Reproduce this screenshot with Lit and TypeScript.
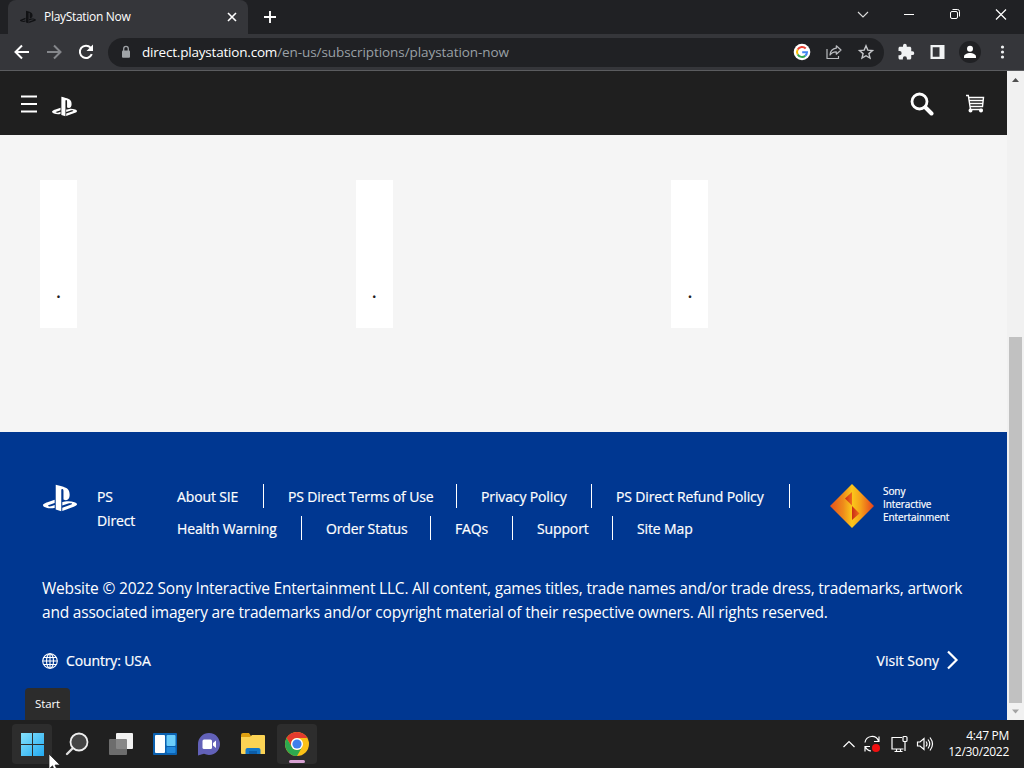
import { LitElement, html, css, svg } from 'lit';

type FooterLink = {
  label: string
  width: number // label width, the separator follows after the padding
  last?: boolean
}

const linkRows: FooterLink[][] = [
  [
    { label: 'About SIE', width: 62 },
    { label: 'PS Direct Terms of Use', width: 144 },
    { label: 'Privacy Policy', width: 86 },
    { label: 'PS Direct Refund Policy', width: 149 },
  ],
  [
    { label: 'Health Warning', width: 100 },
    { label: 'Order Status', width: 80 },
    { label: 'FAQs', width: 33 },
    { label: 'Support', width: 51 },
    { label: 'Site Map', width: 56, last: true },
  ],
]

const psLogo = svg`<path fill="currentColor" d="M8.984 2.596v17.547l3.915 1.261V6.688c0-.69.304-1.151.794-.991.636.18.76.814.76 1.505v5.875c2.441 1.193 4.362-.002 4.362-3.152 0-3.237-1.126-4.675-4.438-5.827-1.307-.448-3.728-1.186-5.39-1.502zm4.656 16.241l6.296-2.275c.715-.258.826-.625.246-.818-.586-.192-1.637-.139-2.357.123l-4.205 1.5V14.98l.24-.085s1.201-.42 2.913-.615c1.696-.18 3.785.03 5.437.661 1.848.601 2.04 1.472 1.576 2.072-.465.6-1.622 1.036-1.622 1.036l-8.544 3.107V18.86zM1.807 18.6c-1.9-.545-2.214-1.668-1.352-2.32.801-.586 2.16-1.052 2.16-1.052l5.615-2.013v2.313L4.205 17c-.705.271-.825.632-.239.826.586.195 1.637.15 2.343-.12L8.247 17v2.074c-.12.03-.256.044-.39.073-1.939.331-3.996.196-6.038-.479z"/>`

export class BrowserChrome extends LitElement {

  static get styles() {
    return css`

    :host {
      display: block;
      height: 71px;
      color: #fff;
    }

    :host * {
      box-sizing: border-box;
    }

    svg {
      display: block;
      flex: none;
    }

    .tabs {
      display: flex;
      height: 34px;
      padding-left: 8px;
      background: #202124;
    }

    .tab {
      display: flex;
      align-items: center;
      width: 240px;
      height: 34px;
      padding: 0 10px 0 12px;
      background: #35363a;
      border-radius: 8px 8px 0 0;
      font-size: 12px;
      letter-spacing: -0.3px;
    }

    .favicon {
      color: #111214;
      margin-right: 8px;
    }

    .title {
      flex: 1;
      padding-bottom: 2px;
      white-space: nowrap;
    }

    .new-tab {
      margin: 10px 0 0 15px;
    }

    .window {
      display: flex;
      align-items: center;
      height: 29px;
      margin-left: auto;
      padding-right: 16px;
      gap: 32px;
    }

    .toolbar {
      display: flex;
      align-items: center;
      height: 36px;
      padding: 0 13px 0 13px;
      background: #35363a;
    }

    .nav {
      display: flex;
      gap: 14px;
    }

    .address {
      display: flex;
      align-items: center;
      width: 776px;
      height: 29px;
      margin-left: 13px;
      padding: 0 9px 0 10px;
      border-radius: 15px;
      background: #202124;
      font-size: 13.5px;
    }

    .url {
      flex: 1;
      margin-left: 8px;
      padding-bottom: 1px;
      color: #9aa0a6;
      white-space: nowrap;
      letter-spacing: -0.07px;
    }

    .domain {
      color: #fff;
      letter-spacing: -0.2px;
    }

    .actions {
      display: flex;
      gap: 14px;
    }

    .tools {
      display: flex;
      align-items: center;
      flex: 1;
      justify-content: space-between;
      padding-left: 13px;
    }

    .line {
      height: 1px;
      background: #5b5c5f;
    }

    `;
  }

  render() {
    return html`
    <div class="tabs">
      <div class="tab">
        <svg class="favicon" width="16" height="16" viewBox="0 0 24 24">${psLogo}</svg>
        <span class="title">PlayStation Now</span>
        <svg width="12" height="12" viewBox="0 0 12 12"><path d="M2 2l8 8M10 2l-8 8" stroke="#fff" stroke-width="1.6"/></svg>
      </div>
      <svg class="new-tab" width="14" height="14" viewBox="0 0 14 14"><path d="M7 1v12M1 7h12" stroke="#fff" stroke-width="1.9"/></svg>
      <div class="window">
        <svg width="14" height="14" viewBox="0 0 14 14"><path d="M2 4l5 5 5-5" fill="none" stroke="#ddd" stroke-width="1.1"/></svg>
        <svg width="14" height="14" viewBox="0 0 14 14"><path d="M2 6.500h10" stroke="#fff"/></svg>
        <svg width="14" height="14" viewBox="0 0 14 14" fill="none" stroke="#fff"><rect x="2.500" y="3.500" width="7" height="7" rx="1.500"/><path d="M4.500 1.500h5a2 2 0 0 1 2 2v5"/></svg>
        <svg width="14" height="14" viewBox="0 0 14 14"><path d="M2 1.500l10 10M12 1.500L2 11.500" stroke="#fff" stroke-width="1.200"/></svg>
      </div>
    </div>
    <div class="toolbar">
      <div class="nav">
        <svg width="18" height="18" viewBox="0 0 18 18"><path d="M16 9H3M9 2.500L2.500 9 9 15.500" fill="none" stroke="#fff" stroke-width="2"/></svg>
        <svg width="18" height="18" viewBox="0 0 18 18"><path d="M2 9h13M9 2.500L15.500 9 9 15.500" fill="none" stroke="#85878b" stroke-width="2"/></svg>
        <svg width="18" height="18" viewBox="0 0 18 18"><path d="M14.800 11.200A6.200 6.200 0 1 1 13.600 4.600L15 6" fill="none" stroke="#fff" stroke-width="2"/><path d="M16 1.500V8H9.500z" fill="#fff"/></svg>
      </div>
      <div class="address">
        <svg width="16" height="16" viewBox="0 0 16 16"><rect x="4" y="6.500" width="8" height="7.300" rx="1" fill="#a0a4a8"/><path d="M5.700 7V4.700a2.300 2.300 0 0 1 4.600 0V7" fill="none" stroke="#a0a4a8" stroke-width="1.300"/></svg>
        <span class="url"><span class="domain">direct.playstation.com</span>/en-us/subscriptions/playstation-now</span>
        <div class="actions">
          <svg width="18" height="18" viewBox="0 0 18 18" fill="none" stroke-width="2">
            <circle cx="9" cy="9" r="8.300" fill="#fff"/>
            <path d="M12.700 5.500A5 5 0 0 0 4.700 6.500" stroke="#ea4335"/>
            <path d="M4.700 6.500a5 5 0 0 0 0 5" stroke="#fbbc05"/>
            <path d="M4.700 11.500a5 5 0 0 0 7.600 1.200" stroke="#34a853"/>
            <path d="M12.300 12.700A5 5 0 0 0 14 9.200H9.200" stroke="#4285f4"/>
          </svg>
          <svg width="18" height="18" viewBox="0 0 18 18" fill="none" stroke="#b9bbbf" stroke-width="1.200" stroke-linejoin="round"><path d="M2 6v9.500h11.500V13"/><path d="M11.300 2.800l4.700 4.200-4.700 4.200V8.800C8.300 8.700 6.300 9.800 5 12c.3-3.800 2.300-6.300 6.300-6.800z"/></svg>
          <svg width="18" height="18" viewBox="0 0 18 18"><path d="M9 2.800l1.800 4.300 4.700.4-3.600 3.100 1.100 4.500L9 12.700l-4 2.400 1.100-4.500-3.600-3.100 4.700-.4z" fill="none" stroke="#c5c7ca" stroke-width="1.400"/></svg>
        </div>
      </div>
      <div class="tools">
        <svg width="18" height="18" viewBox="0 0 24 24"><path fill="#f1f3f4" d="M20.500 11H19V7c0-1.100-.9-2-2-2h-4V3.500a2.500 2.500 0 0 0-5 0V5H4c-1.100 0-2 .9-2 2v3.800h1.500a2.700 2.700 0 0 1 0 5.400H2V20c0 1.100.9 2 2 2h3.800v-1.500a2.700 2.700 0 0 1 5.400 0V22H17c1.100 0 2-.9 2-2v-4h1.500a2.500 2.500 0 0 0 0-5z"/></svg>
        <svg width="16" height="16" viewBox="0 0 16 16"><path fill="#f1f3f4" fill-rule="evenodd" d="M1.500 1h14v14h-14zM3.700 3.200v9.600h6.800V3.200z"/></svg>
        <svg width="22" height="22" viewBox="0 0 22 22"><circle cx="11" cy="11" r="11" fill="#202124"/><circle cx="11" cy="7.800" r="3" fill="#fff"/><path fill="#fff" d="M5 17v-1.500c0-2.300 3.500-3.500 6-3.500s6 1.200 6 3.500V17z"/></svg>
        <svg width="16" height="16" viewBox="0 0 16 16" fill="#f1f3f4"><circle cx="7.500" cy="3" r="1.600"/><circle cx="7.500" cy="8" r="1.600"/><circle cx="7.500" cy="13" r="1.600"/></svg>
      </div>
    </div>
    <div class="line"></div>
    `
  }
}

export class StorePage extends LitElement {

  static get styles() {
    return css`

    :host {
      display: flex;
      height: 649px;
    }

    :host * {
      box-sizing: border-box;
    }

    svg {
      display: block;
      flex: none;
    }

    .page {
      display: flex;
      flex-direction: column;
      width: 1007px;
      color: #fff;
    }

    .header {
      display: flex;
      align-items: center;
      height: 64px;
      padding: 2px 21px 0 20px;
      background: #1f1f1f;
    }

    .header .logo {
      margin: 4px 0 0 13.500px;
    }

    .search {
      margin-left: auto;
    }

    .cart {
      margin-left: 30px;
    }

    .content {
      display: flex;
      height: 297px;
      padding: 45px 40px 0;
      gap: 278.700px;
      background: #f5f5f5;
    }

    .card {
      width: 37px;
      height: 148px;
      padding-top: 99px;
      background: #fff;
      color: #1f1f1f;
      font-size: 18px;
      font-weight: 600;
      line-height: 25px;
      text-align: center;
    }

    .footer {
      flex: 1;
      padding: 48px 42px 0;
      background: #003791;
      font-size: 14px;
      letter-spacing: -0.13px;
      -webkit-text-stroke: 0.2px #fff;
    }

    .top {
      display: flex;
      height: 72px;
    }

    .brand {
      width: 55px;
      padding: 1px 0 0 1px;
    }

    .direct {
      width: 80px;
      padding-top: 5px;
      line-height: 24px;
    }

    .direct span {
      display: block;
      width: 40px;
    }

    .row {
      display: flex;
      height: 32px;
      padding-top: 4px;
    }

    .link {
      box-sizing: content-box;
      height: 24px;
      padding-right: 24px;
      margin-right: 24px;
      border-right: 1px solid #fff;
      line-height: 25px;
      white-space: nowrap;
    }

    .link.last {
      border: none;
    }

    .links {
      width: 653px;
    }

    .sie {
      display: flex;
      gap: 9px;
      padding-top: 4px;
      font-size: 10px;
      line-height: 13px;
      letter-spacing: -0.08px;
    }

    .sie .name {
      width: 70px;
      padding-top: 1px;
    }

    .legal {
      margin: 24px -10px 0 0;
      font-size: 15.5px;
      line-height: 24px;
      letter-spacing: -0.2px;
      white-space: nowrap;
      -webkit-text-stroke: 0;
    }

    .bottom {
      display: flex;
      align-items: center;
      height: 24px;
      margin-top: 24px;
      padding-right: 5px;
    }

    .globe {
      margin-top: 2px;
    }

    .country {
      margin-left: 8px;
    }

    .visit {
      margin-left: auto;
      margin-right: 7px;
      letter-spacing: 0;
    }

    .scroll {
      display: flex;
      flex-direction: column;
      align-items: center;
      width: 17px;
      background: #f1f1f1;
    }

    .thumb {
      width: 13px;
      height: 366px;
      margin-top: 249px;
      background: #c1c1c1;
    }

    `;
  }

  render() {
    return html`
    <div class="page">
      <div class="header">
        <svg width="18" height="18" viewBox="0 0 18 18"><path d="M1 1.500h16M1 9h16M1 16.500h16" stroke="#fff" stroke-width="2"/></svg>
        <svg class="logo" width="25" height="25" viewBox="0 0 24 24">${psLogo}</svg>
        <svg class="search" width="24" height="24" viewBox="0 0 24 24" fill="none" stroke="#fff"><circle cx="9.500" cy="9.500" r="7.500" stroke-width="2.800"/><path d="M15.500 15.500l6 6" stroke-width="4" stroke-linecap="round"/></svg>
        <svg class="cart" width="22" height="20" viewBox="0 0 22 20" fill="none" stroke="#fff" stroke-width="1.400"><path d="M2 1.500h2.300L6.500 15.500H18.500M4.500 3.500H19.500l-1 9H6M5 6.500h14M5.500 9.500h13"/><circle cx="6.500" cy="16.500" r="1.300" fill="#fff"/><circle cx="17" cy="16.500" r="1.300" fill="#fff"/></svg>
      </div>
      <div class="content">
        <div class="card">.</div>
        <div class="card">.</div>
        <div class="card">.</div>
      </div>
      <div class="footer">
        <div class="top">
          <div class="brand"><svg width="34" height="34" viewBox="0 0 24 24">${psLogo}</svg></div>
          <div class="direct"><span>PS Direct</span></div>
          <div class="links">
            ${linkRows.map(row => html`
            <div class="row">
              ${row.map(link => html`<span class="link ${link.last ? 'last' : ''}" style="width:${link.width}px">${link.label}</span>`)}
            </div>`)}
          </div>
          <div class="sie">
            <svg width="44" height="44" viewBox="0 0 44 44">
              <defs>
                <linearGradient id="gold"><stop offset="0" stop-color="#e8501c"/><stop offset=".3" stop-color="#ee8b1b"/><stop offset=".5" stop-color="#fbc81a"/><stop offset=".7" stop-color="#f5a01a"/><stop offset="1" stop-color="#e5401c"/></linearGradient>
                <linearGradient id="red"><stop offset="0" stop-color="#c92a16"/><stop offset="1" stop-color="#ef6c1b"/></linearGradient>
              </defs>
              <path d="M22 0l22 22-22 22L0 22z" fill="url(#gold)"/>
              <path d="M22 8l-7 6.500 7 7z" fill="url(#red)"/>
              <path d="M22 22l7.500 7.500L22 36z" fill="url(#red)"/>
            </svg>
            <div class="name">Sony<br>Interactive<br>Entertainment</div>
          </div>
        </div>
        <div class="legal">Website © 2022 Sony Interactive Entertainment LLC. All content, games titles, trade names and/or trade dress, trademarks, artwork<br>and associated imagery are trademarks and/or copyright material of their respective owners. All rights reserved.</div>
        <div class="bottom">
          <svg class="globe" width="16" height="16" viewBox="0 0 16 16" fill="none" stroke="#fff" stroke-width="1.100"><circle cx="8" cy="8" r="7.300"/><ellipse cx="8" cy="8" rx="3.500" ry="7.300"/><path d="M8 .7v14.600M.7 8h14.600M1.500 4.500h13M1.500 11.500h13"/></svg>
          <span class="country">Country: USA</span>
          <span class="visit">Visit Sony</span>
          <svg width="14" height="20" viewBox="0 0 14 20"><path d="M2 1.500l8.500 8.500L2 18.500" fill="none" stroke="#fff" stroke-width="2.200"/></svg>
        </div>
      </div>
    </div>
    <div class="scroll">
      <svg width="17" height="17" viewBox="0 0 17 17"><path d="M5 11l3.500-4 3.500 4z" fill="#505050"/></svg>
      <div class="thumb"></div>
      <svg width="17" height="17" viewBox="0 0 17 17"><path d="M5 6.500h7l-3.500 4z" fill="#a3a3a3"/></svg>
    </div>
    `
  }
}

export class TaskBar extends LitElement {

  static get styles() {
    return css`

    :host {
      display: flex;
      align-items: center;
      justify-content: space-between;
      height: 48px;
      padding: 0 15px 0 12px;
      box-sizing: border-box;
      background: #202020;
      color: #fff;
    }

    svg {
      display: block;
    }

    .apps, .tray {
      display: flex;
      align-items: center;
    }

    .apps {
      gap: 4px;
    }

    .app {
      position: relative;
      display: grid;
      place-items: center;
      width: 40px;
      height: 40px;
      border-radius: 4px;
    }

    .start {
      margin-right: 1px;
    }

    .active {
      background: #2d2d2d;
    }

    .running {
      position: absolute;
      bottom: 1px;
      left: 12px;
      width: 16px;
      height: 3px;
      border-radius: 2px;
      background: #d7a1d2;
    }

    .tray {
      gap: 7px;
    }

    .volume {
      margin-left: 1px;
    }

    .clock {
      width: 62px;
      margin-left: 6px;
      font-size: 12px;
      line-height: 16px;
      letter-spacing: -0.3px;
      text-align: right;
      white-space: nowrap;
    }

    `;
  }

  render() {
    return html`
    <div class="apps">
      <div class="app start active">
        <svg width="24" height="24" viewBox="0 0 24 24">
          <defs><linearGradient id="win" x2="1" y2="1" gradientUnits="objectBoundingBox"><stop offset="0" stop-color="#86e2fc"/><stop offset="1" stop-color="#22aaf2"/></linearGradient></defs>
          <path d="M1 1H12v11H1zM13 1h11v11H13zM1 13h11v11H1zM13 13h11v11H13z" fill="url(#win)"/>
        </svg>
      </div>
      <div class="app">
        <svg width="24" height="24" viewBox="0 0 24 24"><path d="M8 16l-6 6" stroke="#ddd" stroke-width="2.400" stroke-linecap="round"/><circle cx="14" cy="10" r="8.500" fill="#444" stroke="#eee" stroke-width="1.800"/></svg>
      </div>
      <div class="app">
        <svg width="24" height="24" viewBox="0 0 24 24"><rect x="7" y="1" width="17" height="16" rx="1" fill="#f1f1f1"/><rect y="7" width="18" height="16" rx="1" fill="#777" fill-opacity=".88"/></svg>
      </div>
      <div class="app">
        <svg width="24" height="24" viewBox="0 0 24 24"><rect y="1" width="24" height="22" rx="1" fill="#0b61b0"/><rect x="2" y="3" width="10" height="18" rx="1" fill="#fff"/><rect x="13.500" y="3" width="9" height="11" rx="1" fill="#6bcdfa"/><rect x="13.500" y="15" width="9" height="6" rx="1" fill="#2289dc"/></svg>
      </div>
      <div class="app">
        <svg width="24" height="24" viewBox="0 0 24 24"><path d="M12 1a11 11 0 1 1-5 20.800L1 23.500V12A11 11 0 0 1 12 1z" fill="#6261b8"/><rect x="5.500" y="7.500" width="9.500" height="9.500" rx="1.500" fill="#fff"/><path d="M16 11l3-2.500v7.500l-3-2.500z" fill="#fff"/></svg>
      </div>
      <div class="app">
        <svg width="26" height="24" viewBox="0 0 26 24"><path d="M1 3q0-2 2-2h6l2 3v3H1z" fill="#dfa011"/><path d="M1 5h9l2-2h12q1 0 1 1v18H2q-1 0-1-1z" fill="#fcd354"/><path d="M5.500 22v-4q0-2 2-2h11q2 0 2 2v4z" fill="#1477c8"/><path d="M9 19h8v3H9z" fill="#0c5da8"/></svg>
      </div>
      <div class="app active">
        <svg width="24" height="24" viewBox="0 0 24 24">
          <circle cx="12" cy="12" r="12" fill="#fbc117"/>
          <path d="M1.610 6A12 12 0 0 1 22.390 6H12a6 6 0 0 0-5.200 9z" fill="#e33b2e"/>
          <path d="M1.610 6A12 12 0 0 0 12 24l5.200-9a6 6 0 0 1-10.400 0z" fill="#2da94f"/>
          <circle cx="12" cy="12" r="6" fill="#fff"/><circle cx="12" cy="12" r="4.600" fill="#3f7fea"/>
        </svg>
        <div class="running"></div>
      </div>
    </div>
    <div class="tray">
      <svg width="14" height="14" viewBox="0 0 14 14"><path d="M1.500 10L7 4.500 12.500 10" fill="none" stroke="#fff" stroke-width="1.200"/></svg>
      <svg width="18" height="18" viewBox="0 0 18 18" fill="none" stroke="#fff" stroke-width="1.200"><path d="M2 7.500A7 7 0 0 1 15.500 6M16 1.500V6.500h-5M8 16A7 7 0 0 1 2.500 12M2 16.500v-5h5"/><circle cx="13" cy="13" r="4" fill="#f01010" stroke="none"/></svg>
      <svg width="20" height="18" viewBox="0 0 20 18" fill="none" stroke="#fff" stroke-width="1.200"><path d="M14 2.500H4v11.500H15.500M6.500 16.500h8M8.500 14v2.500M12.500 14v2.500"/><rect x="15" y="1.500" width="4" height="5" rx="1"/><path d="M17 6.500V16"/></svg>
      <svg class="volume" width="18" height="18" viewBox="0 0 18 18" fill="none" stroke="#fff" stroke-width="1.200"><path d="M1.500 7v4h2.500l4 3.500v-11L4 7zM10 6.500q2 2.500 0 5M12 4.500q3.500 4.500 0 9M14 2.500q5 6.500 0 13"/></svg>
      <div class="clock">4:47 PM<br>12/30/2022</div>
    </div>
    `
  }
}

export class AppRoot extends LitElement {

  static get styles() {
    return css`

    :host {
      position: relative;
      display: block;
      width: 1024px;
      height: 768px;
      overflow: hidden;
      font-family: "Open Sans", "Noto Sans", sans-serif;
    }

    .tooltip {
      position: absolute;
      left: 25px;
      top: 688px;
      width: 45px;
      height: 32px;
      border-radius: 4px 4px 0 0;
      background: #2c2c2c;
      color: #fff;
      font-size: 11.5px;
      line-height: 32px;
      letter-spacing: -0.1px;
      text-align: center;
    }

    .cursor {
      position: absolute;
      left: 48px;
      top: 753px;
    }

    `;
  }

  render() {
    return html`
    <browser-chrome></browser-chrome>
    <store-page></store-page>
    <task-bar></task-bar>
    <div class="tooltip">Start</div>
    <svg class="cursor" width="14" height="20" viewBox="0 0 14 20"><path d="M1 1v15l3.500-3.200L7 18.500l2.500-1L7 12h5z" fill="#fff" stroke="#222" stroke-width=".7"/></svg>
    `
  }
}

customElements.get('browser-chrome') || customElements.define('browser-chrome', BrowserChrome);
customElements.get('store-page') || customElements.define('store-page', StorePage);
customElements.get('task-bar') || customElements.define('task-bar', TaskBar);
customElements.get('app-root') || customElements.define('app-root', AppRoot);
